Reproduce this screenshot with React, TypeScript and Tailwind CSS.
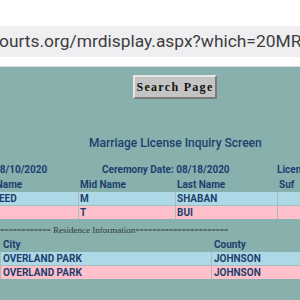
import React from "react";

const navy = "text-[#1d3f6d]";

export default function App() {
  return (
    <div className="w-[300px] h-[300px] overflow-hidden bg-white font-['Roboto',sans-serif]">
      {/* browser chrome */}
      <div className="h-[26px] bg-white" />
      <div className="h-[31px] bg-[#efeff1] flex items-center overflow-hidden">
        <span className="whitespace-nowrap text-[17.4px] text-[#3d3d3f] -ml-[1px]">
          ourts.org/mrdisplay.aspx?which=20MR
        </span>
      </div>
      <div className="h-[10px] bg-white border-b border-[#d6dede]" />

      {/* page */}
      <div className="bg-[#88b0ad] h-[233px] pt-[7px]">
        <div className="pl-[133px]">
          <button className="w-[84px] h-[24px] bg-[#c4c4c4] border-2 border-t-[#e6e6e6] border-l-[#e6e6e6] border-r-[#7a7a7a] border-b-[#7a7a7a] font-['Liberation_Serif',serif] font-bold text-[12px] tracking-[1.3px] text-[#111] leading-none">
            Search Page
          </button>
        </div>

        <div className={`mt-[37px] pl-[89px] text-[12px] leading-[15px] font-medium ${navy}`}>
          Marriage License Inquiry Screen
        </div>

        <div className={`mt-[12px] text-[10px] font-bold leading-[14px] ${navy} relative h-[14px] whitespace-nowrap`}>
          <span className="absolute left-[-6px]">08/10/2020</span>
          <span className="absolute left-[102px]">Ceremony Date: 08/18/2020</span>
          <span className="absolute left-[277px]">License</span>
        </div>

        <div className={`mt-[1px] grid grid-cols-[78px_96px_101px_1fr] gap-x-[1px] text-[10px] font-bold leading-[14px] ${navy}`}>
          <div className="-ml-[27px] whitespace-nowrap">First Name</div>
          <div className="pl-[1px]">Mid Name</div>
          <div className="pl-[1px]">Last Name</div>
          <div className="pl-[1px]">Suf</div>
        </div>

        <div className={`grid grid-cols-[78px_96px_101px_1fr] gap-[1px] bg-[#a8bcbb] text-[10px] font-bold leading-[13px] ${navy}`}>
          <div className="bg-[#add8e6] whitespace-nowrap overflow-hidden">
            <span className="-ml-[14px]">SAEED</span>
          </div>
          <div className="bg-[#add8e6] pl-[1px]">M</div>
          <div className="bg-[#add8e6] pl-[1px]">SHABAN</div>
          <div className="bg-[#add8e6]" />
          <div className="bg-[#ffc0cb] h-[13px]" />
          <div className="bg-[#ffc0cb] pl-[1px]">T</div>
          <div className="bg-[#ffc0cb] pl-[1px]">BUI</div>
          <div className="bg-[#ffc0cb]" />
        </div>

        <div className="mt-[7px] h-[9px] whitespace-nowrap font-['Liberation_Serif',serif] text-[9px] leading-[9px] text-[#2e3a3a]">
          <span className="text-[7.5px]">============</span> Residence Information
          <span className="text-[7.5px]">======================</span>
        </div>

        <div className={`mt-[3px] grid grid-cols-[210px_1fr] gap-x-[1px] pl-[1px] text-[10px] font-bold leading-[14px] ${navy}`}>
          <div className="pl-[2px]">City</div>
          <div className="pl-[2px]">County</div>
        </div>

        <div className={`grid grid-cols-[210px_1fr] gap-[1px] bg-[#a8bcbb] pl-[1px] text-[10px] font-bold leading-[13px] ${navy}`}>
          <div className="bg-[#add8e6] pl-[2px]">OVERLAND PARK</div>
          <div className="bg-[#add8e6] pl-[2px]">JOHNSON</div>
          <div className="bg-[#ffc0cb] pl-[2px]">OVERLAND PARK</div>
          <div className="bg-[#ffc0cb] pl-[2px]">JOHNSON</div>
        </div>
      </div>
    </div>
  );
}
